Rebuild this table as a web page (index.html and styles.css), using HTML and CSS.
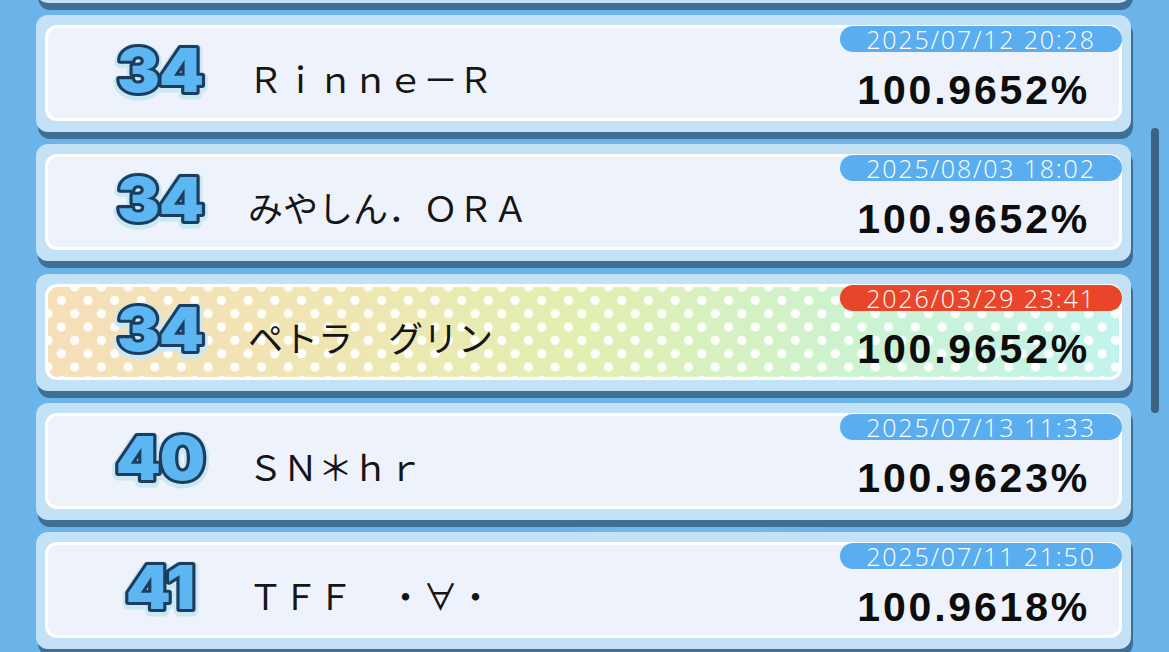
FILE: index.html
```html
<!DOCTYPE html>
<html lang="ja">
<head>
<meta charset="utf-8">
<title>Ranking</title>
<link rel="stylesheet" href="styles.css">
</head>
<body>
<div class="screen">
  <ul class="list">
    <li class="card">
      <div class="inner"></div>
    </li>
    <li class="card">
      <div class="inner">
        <div class="rank"><svg viewBox="0 0 110 60" width="110" height="60"><text class="halo" x="55" y="51">34</text><text class="num" x="55" y="49">34</text></svg></div>
        <div class="name">Ｒｉｎｎｅ－Ｒ</div>
        <div class="score">100.9652%</div>
        <div class="date">2025/07/12 20:28</div>
      </div>
    </li>
    <li class="card">
      <div class="inner">
        <div class="rank"><svg viewBox="0 0 110 60" width="110" height="60"><text class="halo" x="55" y="51">34</text><text class="num" x="55" y="49">34</text></svg></div>
        <div class="name">みやしん．ＯＲＡ</div>
        <div class="score">100.9652%</div>
        <div class="date">2025/08/03 18:02</div>
      </div>
    </li>
    <li class="card me">
      <div class="inner">
        <div class="rank"><svg viewBox="0 0 110 60" width="110" height="60"><text class="halo" x="55" y="51">34</text><text class="num" x="55" y="49">34</text></svg></div>
        <div class="name">ペトラ　グリン</div>
        <div class="score">100.9652%</div>
        <div class="date">2026/03/29 23:41</div>
      </div>
    </li>
    <li class="card">
      <div class="inner">
        <div class="rank"><svg viewBox="0 0 110 60" width="110" height="60"><text class="halo" x="55" y="51">40</text><text class="num" x="55" y="49">40</text></svg></div>
        <div class="name">ＳＮ＊ｈｒ</div>
        <div class="score">100.9623%</div>
        <div class="date">2025/07/13 11:33</div>
      </div>
    </li>
    <li class="card">
      <div class="inner">
        <div class="rank"><svg viewBox="0 0 110 60" width="110" height="60"><text class="halo" x="55" y="51">41</text><text class="num" x="55" y="49">41</text></svg></div>
        <div class="name">ＴＦＦ　・∀・</div>
        <div class="score">100.9618%</div>
        <div class="date">2025/07/11 21:50</div>
      </div>
    </li>
  </ul>
  <div class="scrollbar"></div>
</div>
</body>
</html>
```
FILE: styles.css
```css
html, body {
  margin: 0;
  padding: 0;
}
body {
  background: #6bb4ea;
  width: 1169px;
  height: 652px;
  overflow: hidden;
}
.screen {
  position: relative;
  height: 652px;
  overflow: hidden;
  background:
    radial-gradient(ellipse 140px 120px at 690px 560px, rgba(140,200,240,0.35), rgba(140,200,240,0) 100%);
}
.list {
  list-style: none;
  margin: -114.25px 0 0 36px;
  padding: 0;
  width: 1095px;
  display: flex;
  flex-direction: column;
  gap: 12.25px;
}
.card {
  height: 117px;
  flex: none;
  box-sizing: border-box;
  padding: 10px 9px 11px 9px;
  background: #c4e2f6;
  border-radius: 12px;
  box-shadow: 2px 7px 0 #3f6f95;
}
.inner {
  position: relative;
  height: 100%;
  box-sizing: border-box;
  border: 3px solid #ffffff;
  border-radius: 12px;
  background: #eef2fa;
  display: flex;
  align-items: center;
  padding-left: 57px;
}
.me .inner {
  background:
    radial-gradient(circle, rgba(255,255,255,0.95) 4.2px, rgba(255,255,255,0) 5px) 0 0 / 26.7px 26.7px,
    radial-gradient(circle, rgba(255,255,255,0.95) 4.2px, rgba(255,255,255,0) 5px) 13.35px 13.35px / 26.7px 26.7px,
    linear-gradient(90deg, #f5dfb9 0%, #efe6b2 28%, #e2efb1 50%, #cff2cc 72%, #c3f3ee 100%);
}
.rank {
  width: 110px;
  height: 60px;
  flex: none;
}
.rank svg {
  display: block;
  overflow: visible;
}
.rank text {
  font-family: Inter, "DejaVu Sans", sans-serif;
  font-weight: 900;
  font-size: 60px;
  letter-spacing: -1px;
  text-anchor: middle;
  stroke-linejoin: round;
  transform-box: fill-box;
  transform-origin: center;
  transform: scaleX(1.07);
}
.rank .halo {
  fill: #c9e8f1;
  stroke: #c9e8f1;
  stroke-width: 11px;
}
.rank .num {
  fill: #5cb6f1;
  stroke: #1d3d60;
  stroke-width: 6px;
  paint-order: stroke fill;
}
.name {
  margin-left: 33px;
  padding-top: 9px;
  font-family: "Noto Sans CJK JP", sans-serif;
  font-size: 35px;
  line-height: 1;
  color: #151515;
  white-space: nowrap;
}
.score {
  margin-left: auto;
  margin-right: 29px;
  margin-bottom: 8px;
  align-self: flex-end;
  font-family: "Liberation Sans", Arial, sans-serif;
  font-weight: bold;
  font-size: 41px;
  line-height: 40px;
  letter-spacing: 2.8px;
  color: #0d0d0d;
  white-space: nowrap;
}
.date {
  position: absolute;
  top: -2px;
  right: -3px;
  width: 282px;
  height: 26px;
  border-radius: 13px;
  background: #5aaeef;
  color: #ffffff;
  font-family: "Open Sans", sans-serif;
  font-weight: 300;
  font-size: 25px;
  line-height: 26px;
  letter-spacing: 1.8px;
  text-align: center;
  white-space: nowrap;
}
.me .date {
  background: #e8452a;
}
.scrollbar {
  position: absolute;
  left: 1151px;
  top: 128px;
  width: 8px;
  height: 285px;
  border-radius: 4px;
  background: #3c6383;
}
```
